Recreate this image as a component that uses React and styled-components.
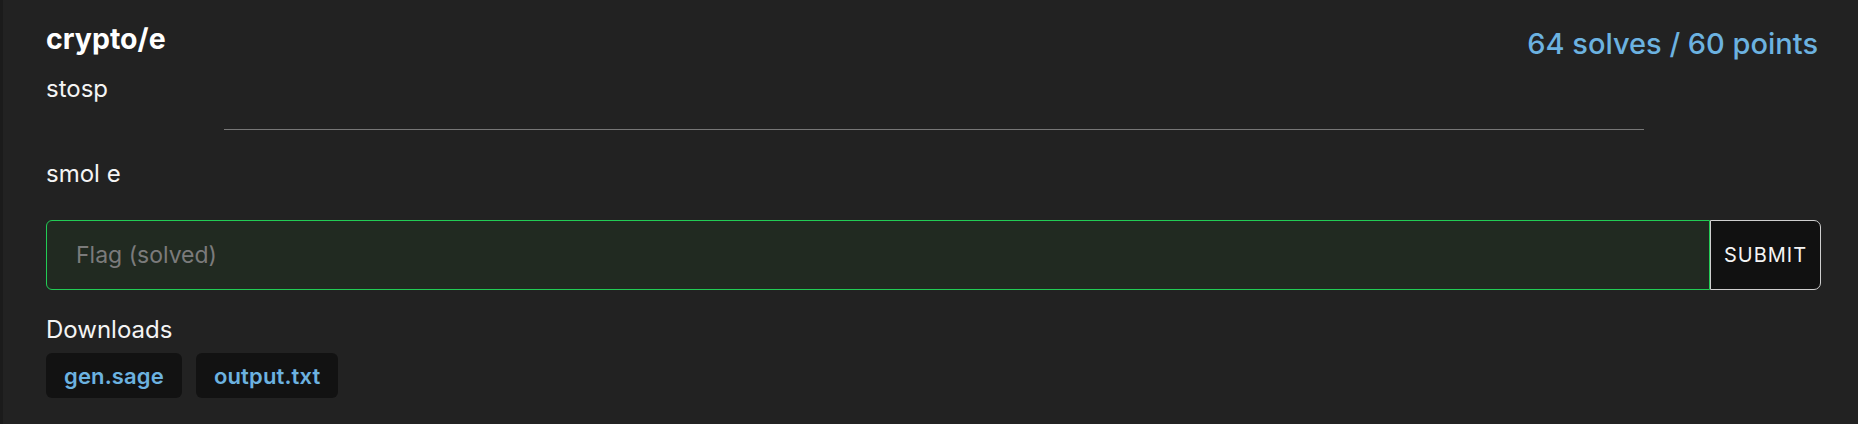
import styled, { createGlobalStyle } from "styled-components";

/* Global ---------------------------*/
const GlobalStyle = createGlobalStyle`
    html, body {
        margin: 0;
        padding: 0;
        background: #222222;
    }
    body {
        font-family: Inter, "Noto Sans", sans-serif;
        color: #f4f4f4;
    }
`;

const files = ["gen.sage", "output.txt"];

const App = () => {
    return (
        <>
            <GlobalStyle />
            <ChallengeStyled className="Challenge">
                <div className="header">
                    <h2 className="title">crypto/e</h2>
                    <div className="stats">64 solves / 60 points</div>
                </div>
                <div className="author">stosp</div>
                <hr />
                <p className="description">smol e</p>
                <form className="flag" onSubmit={(e) => e.preventDefault()}>
                    <FlagInput placeholder="Flag (solved)" solved />
                    <SubmitButton type="submit">SUBMIT</SubmitButton>
                </form>
                <div className="downloads">
                    <div className="label">Downloads</div>
                    <div className="files">
                        {files.map((f) => (
                            <FileLink key={f} href="#">
                                {f}
                            </FileLink>
                        ))}
                    </div>
                </div>
            </ChallengeStyled>
        </>
    );
};

export default App;

const ChallengeStyled = styled.div`
    box-sizing: border-box;
    width: 1858px;
    height: 424px;
    border-left: 3px solid #1b1b1b;
    padding: 21px 37px 0px 43px;
    background: #222222;

    .header {
        display: flex;
        justify-content: space-between;
        align-items: flex-start;
    }
    .title {
        margin: 0;
        font-size: 28.5px;
        line-height: 36px;
        font-weight: 700;
        color: #ffffff;
    }
    .stats {
        margin-top: 5px;
        margin-right: 3px;
        font-size: 29px;
        line-height: 36px;
        font-weight: 500;
        color: #6cb2e0;
    }
    .author {
        margin-top: 11px;
        font-size: 24px;
        line-height: 32px;
    }
    hr {
        width: 80%;
        margin: 24px auto 0px;
        border: none;
        border-top: 1px solid #777777;
    }
    .description {
        margin: 28px 0px 0px;
        font-size: 24px;
        line-height: 32px;
    }
    .flag {
        display: flex;
        margin-top: 30px;
        height: 70px;
    }
    .downloads {
        margin-top: 24px;
        .label {
            font-size: 24px;
            line-height: 32px;
        }
        .files {
            display: flex;
            gap: 14px;
            margin-top: 7px;
        }
    }
`;

const FlagInput = styled.input`
    flex: 1;
    box-sizing: border-box;
    height: 100%;
    padding: 0px 29px;
    border: 1px solid ${(p) => (p.solved ? "#22cc55" : "#777777")};
    border-radius: 6px 0px 0px 6px;
    background: ${(p) => (p.solved ? "#212a21" : "#1a1a1a")};
    color: #f4f4f4;
    font-family: Inter, "Noto Sans", sans-serif;
    font-size: 23px;
    outline: none;

    &::placeholder {
        color: #7b7b7b;
    }
`;

const SubmitButton = styled.button`
    box-sizing: border-box;
    width: 111px;
    height: 100%;
    padding: 0px;
    border: 1px solid #cfcfcf;
    border-radius: 0px 7px 7px 0px;
    background: #111111;
    color: #f4f4f4;
    font-family: Inter, "Noto Sans", sans-serif;
    font-size: 20px;
    letter-spacing: 1px;
    cursor: pointer;
`;

const FileLink = styled.a`
    display: inline-flex;
    align-items: center;
    box-sizing: border-box;
    height: 45px;
    padding: 0px 18px;
    border-radius: 6px;
    background: #121212;
    color: #6cb2e0;
    font-size: 22px;
    font-weight: 600;
    letter-spacing: 0.15px;
    text-decoration: none;
`;
